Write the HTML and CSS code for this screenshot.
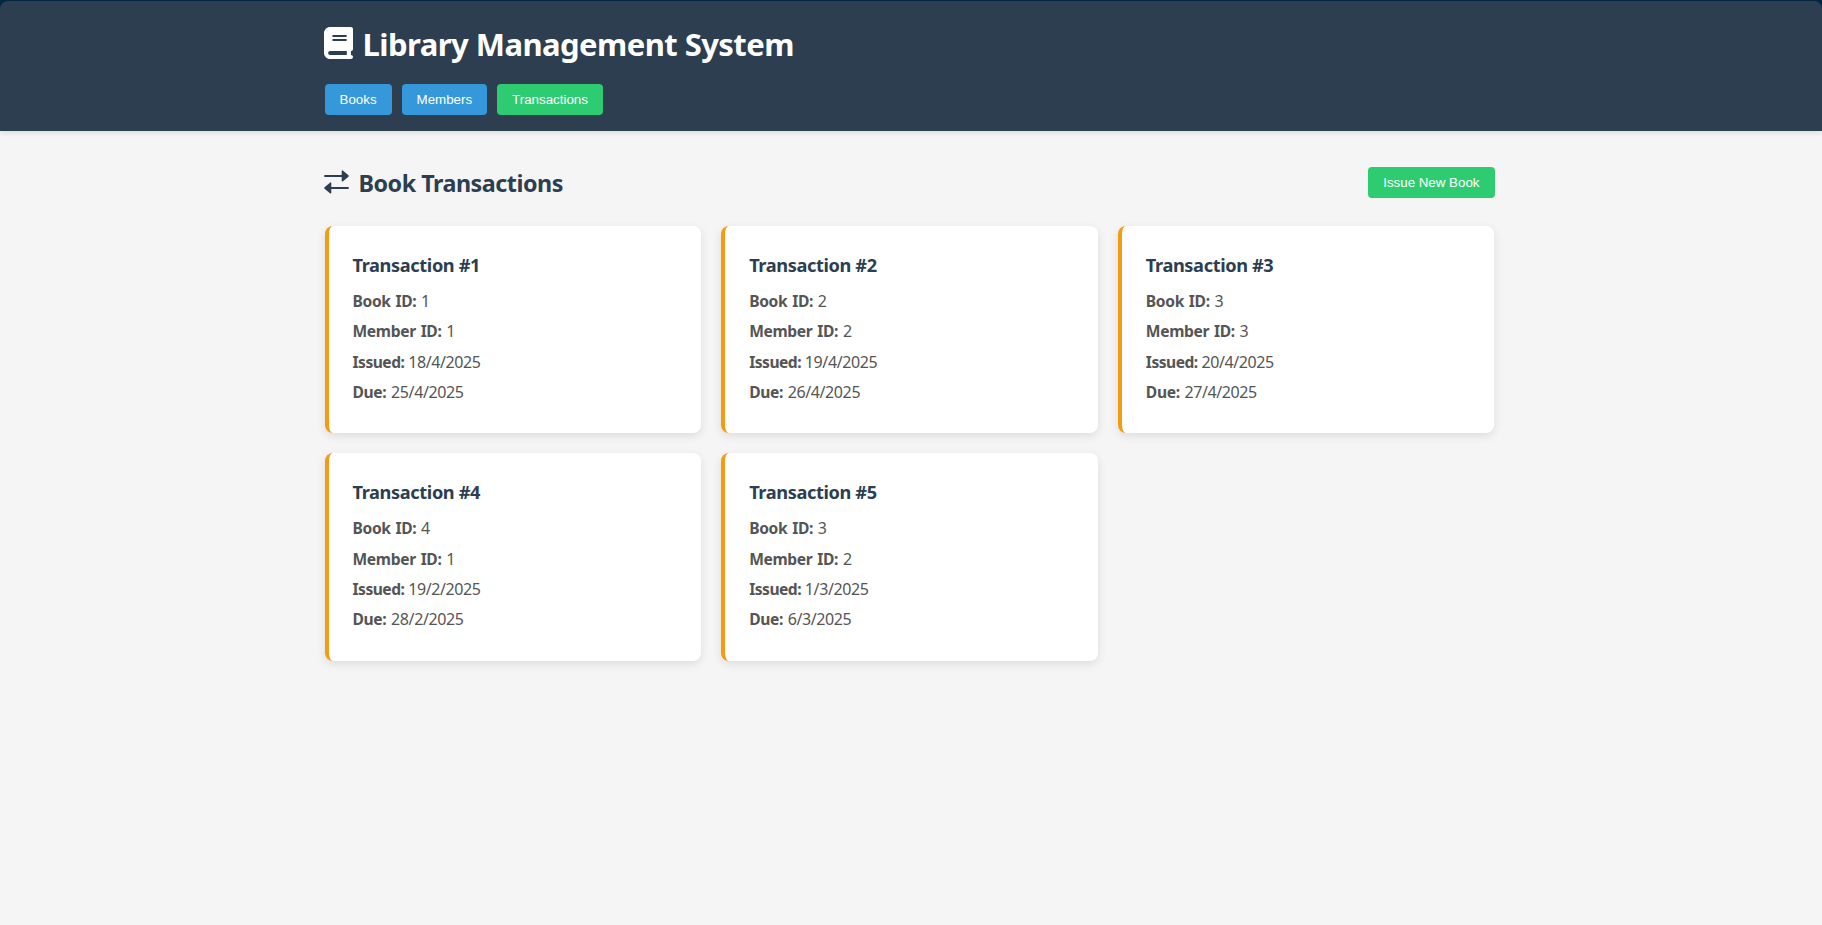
FILE: index.html
```html
<!DOCTYPE html>
<html lang="en">
<head>
<meta charset="utf-8">
<title>Library Management System</title>
<link rel="stylesheet" href="styles.css">
</head>
<body>
<header class="site-header">
  <div class="container">
    <h1 class="brand">
      <svg class="brand-icon" viewBox="0 0 448 512" preserveAspectRatio="none" fill="currentColor"><path d="M96 0C43 0 0 43 0 96V416c0 53 43 96 96 96H384h32c17.700 0 32-14.300 32-32s-14.300-32-32-32V384c17.700 0 32-14.300 32-32V32c0-17.700-14.300-32-32-32H384 96zm0 384H352v64H96c-17.700 0-32-14.300-32-32s14.300-32 32-32zm32-240c0-8.800 7.200-16 16-16H336c8.800 0 16 7.200 16 16s-7.200 16-16 16H144c-8.800 0-16-7.200-16-16zm16 48H336c8.800 0 16 7.200 16 16s-7.200 16-16 16H144c-8.800 0-16-7.200-16-16s7.200-16 16-16z"/></svg>
      <span>Library Management System</span>
    </h1>
    <nav class="nav">
      <button class="btn">Books</button>
      <button class="btn">Members</button>
      <button class="btn btn-green">Transactions</button>
    </nav>
  </div>
</header>
<main class="container main">
  <div class="section-header">
    <h2 class="section-title">
      <svg class="section-icon" viewBox="0 0 24 24" preserveAspectRatio="none" fill="currentColor"><path d="M1.100 4.900H17V.9Q17.200.2 18 .4L23.500 5.300Q24 6 23.500 6.700L18 11.500Q17.200 11.800 17 11.100V7.100H1.100Q0 7 0 6T1.100 4.900ZM22.900 16.900H7V12.900Q6.800 12.200 6 12.400L.5 17.300Q0 18 .5 18.700L6 23.500Q6.800 23.800 7 23.100V19.100H22.900Q24 19 24 18T22.900 16.900Z"/></svg>
      <span>Book Transactions</span>
    </h2>
    <button class="btn btn-green">Issue New Book</button>
  </div>
  <div class="cards">
    <article class="card">
      <h3 class="card-title">Transaction #1</h3>
      <p class="row"><strong class="label">Book ID:</strong> 1</p>
      <p class="row"><strong class="label">Member ID:</strong> 1</p>
      <p class="row"><strong class="label label-issued">Issued:</strong> 18/4/2025</p>
      <p class="row"><strong class="label">Due:</strong> 25/4/2025</p>
    </article>
    <article class="card">
      <h3 class="card-title">Transaction #2</h3>
      <p class="row"><strong class="label">Book ID:</strong> 2</p>
      <p class="row"><strong class="label">Member ID:</strong> 2</p>
      <p class="row"><strong class="label label-issued">Issued:</strong> 19/4/2025</p>
      <p class="row"><strong class="label">Due:</strong> 26/4/2025</p>
    </article>
    <article class="card">
      <h3 class="card-title">Transaction #3</h3>
      <p class="row"><strong class="label">Book ID:</strong> 3</p>
      <p class="row"><strong class="label">Member ID:</strong> 3</p>
      <p class="row"><strong class="label label-issued">Issued:</strong> 20/4/2025</p>
      <p class="row"><strong class="label">Due:</strong> 27/4/2025</p>
    </article>
    <article class="card">
      <h3 class="card-title">Transaction #4</h3>
      <p class="row"><strong class="label">Book ID:</strong> 4</p>
      <p class="row"><strong class="label">Member ID:</strong> 1</p>
      <p class="row"><strong class="label label-issued">Issued:</strong> 19/2/2025</p>
      <p class="row"><strong class="label">Due:</strong> 28/2/2025</p>
    </article>
    <article class="card">
      <h3 class="card-title">Transaction #5</h3>
      <p class="row"><strong class="label">Book ID:</strong> 3</p>
      <p class="row"><strong class="label">Member ID:</strong> 2</p>
      <p class="row"><strong class="label label-issued">Issued:</strong> 1/3/2025</p>
      <p class="row"><strong class="label">Due:</strong> 6/3/2025</p>
    </article>
  </div>
</main>
</body>
</html>
```

FILE: styles.css
```css
* { box-sizing: border-box; margin: 0; padding: 0; }

html { background: #f5f5f5; }

body {
  background: linear-gradient(#002744 0 12px, #f5f5f5 12px);
  color: #333;
  font-family: "Segoe UI", "Noto Sans", sans-serif;
  font-size: 16px;
  line-height: 1.6;
  padding-top: 1px;
  min-height: 925px;
}

.container { width: 1170px; margin-left: 324.5px; }

.site-header {
  height: 130px;
  background: #2c3e50;
  border-radius: 8px 8px 0 0;
  box-shadow: 0 2px 5px rgba(0, 0, 0, 0.1);
}

.site-header .container { padding-top: 18px; }

.brand {
  display: flex;
  align-items: center;
  height: 51px;
  gap: 9.500px;
  margin-bottom: 14px;
  color: #fff;
  font-size: 31px;
  font-weight: 700;
  letter-spacing: -0.550px;
}

.brand-icon { width: 29px; height: 32px; margin: -4px 0 0 -0.500px; }

.nav { display: flex; gap: 10px; }

.btn {
  height: 31px;
  padding: 0 15px;
  border: 0;
  border-radius: 4px;
  background: #3498db;
  color: #fff;
  font: 13.333px/31px "Liberation Sans", Arial, sans-serif;
  white-space: nowrap;
}

.btn-green { background: #2ecc71; }

.main { padding-top: 32px; }

.section-header {
  display: flex;
  align-items: center;
  justify-content: space-between;
  height: 38px;
  margin-bottom: 25px;
}

.section-title {
  display: flex;
  align-items: center;
  gap: 9.500px;
  padding-top: 3px;
  color: #2c3e50;
  font-size: 23.300px;
  font-weight: 700;
  letter-spacing: -0.480px;
}

.section-icon { width: 25px; height: 24px; margin: -4px 0 0 -0.500px; }

.cards {
  display: grid;
  grid-template-columns: repeat(3, 1fr);
  gap: 20px;
}

.card {
  height: 207.300px;
  padding: 24px;
  background: #fff;
  border-left: 4px solid #f39c12;
  border-radius: 8px;
  box-shadow: 0 3px 10px rgba(0, 0, 0, 0.1);
}

.card-title {
  margin-bottom: 9px;
  color: #2c3e50;
  font-size: 18.200px;
  line-height: 30px;
  font-weight: 700;
  letter-spacing: -0.380px;
}

.row {
  margin-bottom: 4.800px;
  color: #555;
  font-weight: 400;
  letter-spacing: -0.400px;
}

.label {
  margin-right: 1px;
  font-size: 15.600px;
  font-weight: 700;
  letter-spacing: -0.350px;
  word-spacing: 1.200px;
}

.label-issued {
  margin-right: 0;
  letter-spacing: -0.500px;
}
```
